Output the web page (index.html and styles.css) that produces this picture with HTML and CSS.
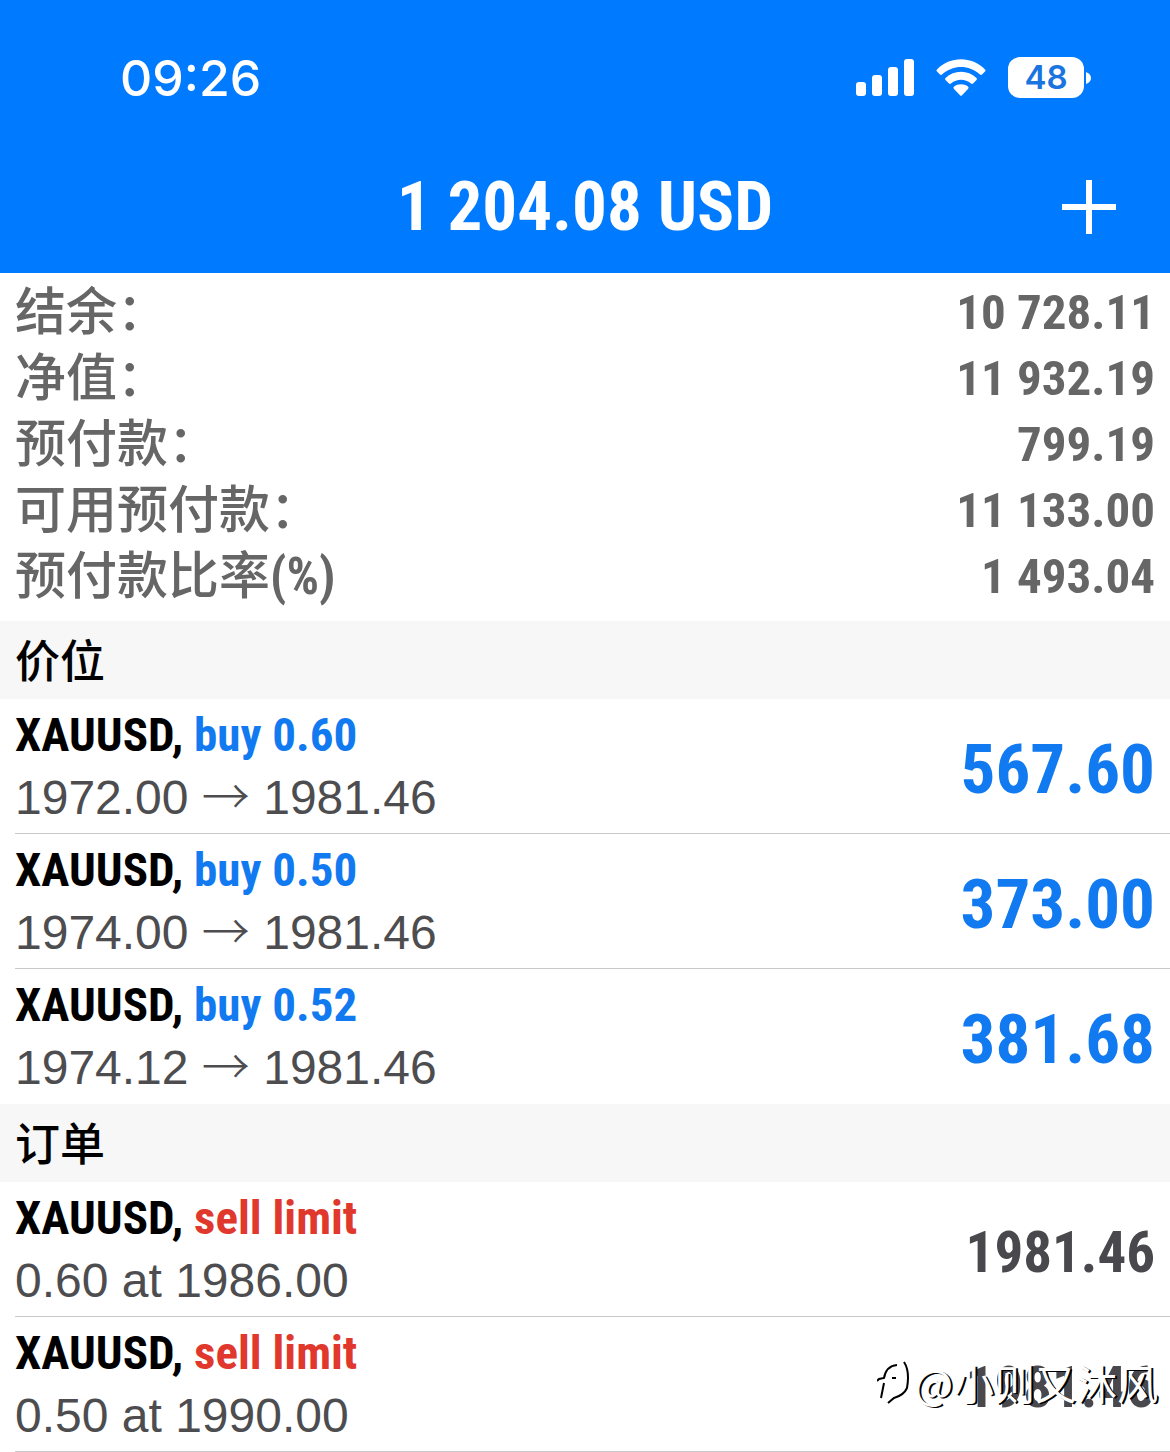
FILE: index.html
```html
<!DOCTYPE html>
<html lang="zh-CN">
<head>
    <meta charset="UTF-8">
    <meta name="viewport" content="width=device-width, initial-scale=1.0">
    <title>1 204.08 USD</title>
    <link rel="stylesheet" href="styles.css">
</head>
<body>
    <header class="header">
        <div class="status-bar">
            <div class="time">09:26</div>
            <div class="status-icons">
                <svg class="signal" width="58" height="38" viewBox="0 0 58 38" fill="#fff" aria-hidden="true">
                    <rect x="0" y="23" width="10" height="14" rx="3"/>
                    <rect x="16" y="16" width="10" height="21" rx="3"/>
                    <rect x="32" y="8" width="10" height="29" rx="3"/>
                    <rect x="48" y="0" width="10" height="37" rx="3"/>
                </svg>
                <svg class="wifi" width="50" height="38" viewBox="0 0 50 38" fill="#fff" aria-hidden="true">
                    <path d="M1 10.500C14-3.200 36-3.200 49 10.500Q50 11.500 49 12.500L46 15.500Q45 16.300 44 15.500C33 5.500 17 5.500 6 15.500Q5 16.300 4 15.500L1 12.500Q0 11.500 1 10.500Z"/>
                    <path d="M9.500 19C18 10.800 32 10.800 40.500 19Q41.500 20 40.500 21L37 24.500Q36 25.300 35 24.500C29 19.500 21 19.500 15 24.500Q14 25.300 13 24.500L9.500 21Q8.500 20 9.500 19Z"/>
                    <path d="M18 27.600C22 24.500 28 24.500 32 27.600Q33.200 28.700 32 29.900L26 36.300Q25 37.300 24 36.300L18 29.900Q16.800 28.700 18 27.600Z"/>
                </svg>
                <div class="battery">
                    <span class="battery-level">48</span>
                    <svg width="5" height="14" viewBox="0 0 5 14" fill="#fff" aria-hidden="true">
                        <path d="M0 1Q5 3 5 7T0 13Z"/>
                    </svg>
                </div>
            </div>
        </div>
        <div class="nav-bar">
            <h1 class="title">1 204.08 USD</h1>
            <button class="add-btn" type="button" aria-label="+">
                <svg width="54" height="54" viewBox="0 0 54 54" stroke="#fff" stroke-width="6" aria-hidden="true">
                    <path d="M27 0V54M0 27H54"/>
                </svg>
            </button>
        </div>
    </header>

    <main>
        <dl class="summary">
            <div class="summary-row"><dt>结余：</dt><dd>10 728.11</dd></div>
            <div class="summary-row"><dt>净值：</dt><dd>11 932.19</dd></div>
            <div class="summary-row"><dt>预付款：</dt><dd>799.19</dd></div>
            <div class="summary-row"><dt>可用预付款：</dt><dd>11 133.00</dd></div>
            <div class="summary-row"><dt>预付款比率<b>(%)</b></dt><dd>1 493.04</dd></div>
        </dl>

        <h2 class="section-title">价位</h2>
        <ul class="list positions">
            <li class="item">
                <div class="info">
                    <div class="symbol">XAUUSD, <span class="buy">buy 0.60</span></div>
                    <div class="detail">1972.00 <span class="arrow">→</span> 1981.46</div>
                </div>
                <div class="profit">567.60</div>
            </li>
            <li class="item">
                <div class="info">
                    <div class="symbol">XAUUSD, <span class="buy">buy 0.50</span></div>
                    <div class="detail">1974.00 <span class="arrow">→</span> 1981.46</div>
                </div>
                <div class="profit">373.00</div>
            </li>
            <li class="item">
                <div class="info">
                    <div class="symbol">XAUUSD, <span class="buy">buy 0.52</span></div>
                    <div class="detail">1974.12 <span class="arrow">→</span> 1981.46</div>
                </div>
                <div class="profit">381.68</div>
            </li>
        </ul>

        <h2 class="section-title">订单</h2>
        <ul class="list">
            <li class="item">
                <div class="info">
                    <div class="symbol">XAUUSD, <span class="sell">sell limit</span></div>
                    <div class="detail">0.60 at 1986.00</div>
                </div>
                <div class="price">1981.46</div>
            </li>
            <li class="item">
                <div class="info">
                    <div class="symbol">XAUUSD, <span class="sell">sell limit</span></div>
                    <div class="detail">0.50 at 1990.00</div>
                </div>
                <div class="price">1981.46</div>
                <div class="watermark">
                    <svg width="34" height="44" viewBox="0 0 34 44" fill="none" stroke="#000" stroke-width="2" aria-hidden="true">
                        <path d="M7 23L4 38M0 21L2 19L7 18Q9 6 20 5M15 18H19"/>
                        <path d="M27 2Q33 11 30 28Q27 35 17 38L11 43"/>
                    </svg>
                    <span>@小则又沐风</span>
                </div>
            </li>
        </ul>
    </main>
</body>
</html>
```
FILE: styles.css
```css
* {
    margin: 0;
    padding: 0;
    box-sizing: border-box;
}

body {
    font-family: 'Roboto Condensed', 'Noto Sans CJK SC', sans-serif;
    background: #fff;
    color: #000;
}

.header {
    background: #007aff;
    color: #fff;
}

.status-bar {
    display: flex;
    align-items: center;
    justify-content: space-between;
    height: 140px;
    padding: 15px 79px 0 120px;
}

.time {
    font-family: Inter, sans-serif;
    font-size: 50px;
    font-weight: 500;
}

.status-icons {
    display: flex;
    align-items: center;
    gap: 22px;
}

.battery {
    display: flex;
    align-items: center;
    gap: 2px;
}

.battery-level {
    width: 76px;
    background: #fff;
    border-radius: 12px;
    color: #1a75e0;
    font-family: Inter, sans-serif;
    font-size: 33px;
    font-weight: 600;
    line-height: 41px;
    text-align: center;
}

.nav-bar {
    display: grid;
    grid-template-columns: 1fr auto 1fr;
    align-items: center;
    height: 133px;
    padding: 0 54px;
}

.title {
    grid-column: 2;
    font-size: 69px;
    font-weight: bold;
}

.add-btn {
    justify-self: end;
    background: none;
    border: none;
    cursor: pointer;
}

.add-btn svg {
    display: block;
}

.summary {
    padding: 7px 15px 11px;
    color: #666;
    font-weight: bold;
    line-height: 66px;
}

.summary-row {
    display: flex;
    justify-content: space-between;
    height: 66px;
}

.summary dt {
    font-size: 51px;
    font-weight: 500;
}

.summary dd {
    font-size: 49px;
}

.section-title {
    height: 78px;
    padding: 0 15px;
    background: #f7f7f7;
    font-family: 'Noto Sans CJK SC', sans-serif;
    font-size: 45px;
    font-weight: 500;
    line-height: 76px;
}

.list {
    list-style: none;
}

.item {
    position: relative;
    display: flex;
    align-items: center;
    justify-content: space-between;
    margin-left: 15px;
    padding: 4px 15px 4px 0;
    border-bottom: 1px solid #c8c7cc;
}

.positions .item:last-child {
    border-bottom-color: transparent;
}

.symbol,
.detail {
    height: 63px;
    line-height: 63px;
    white-space: nowrap;
}

.symbol {
    font-size: 47px;
    font-weight: bold;
}

.detail {
    color: #4d4d50;
    font-family: 'Liberation Sans', sans-serif;
    font-size: 48px;
}

.arrow {
    font-family: 'Noto Sans CJK SC', sans-serif;
    font-weight: 300;
    line-height: 1;
}

.buy,
.profit {
    color: #127af0;
}

.sell {
    color: #e0382c;
}

.profit,
.price {
    padding-top: 6px;
    font-weight: bold;
}

.profit {
    font-size: 69px;
}

.price {
    color: #48484d;
    font-size: 57px;
}

/* signature laid over the last row */
.watermark {
    position: absolute;
    right: 12px;
    top: 38px;
    display: flex;
    align-items: center;
    gap: 3px;
    color: #fff;
    font-family: 'Noto Sans CJK SC', sans-serif;
    font-size: 41px;
    line-height: 54px;
    text-shadow: 2px 1px 0 #000;
}
```
